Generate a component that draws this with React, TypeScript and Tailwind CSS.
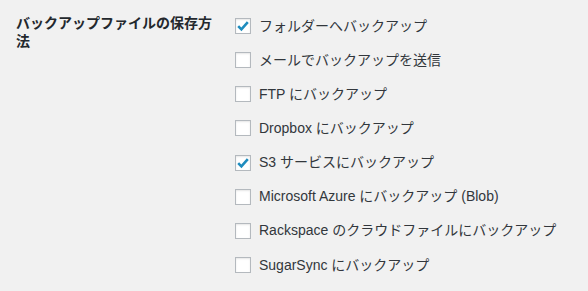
import React from 'react';

const options: Array<{ label: string; checked: boolean }> = [
  { label: 'フォルダーへバックアップ', checked: true },
  { label: 'メールでバックアップを送信', checked: false },
  { label: 'FTP にバックアップ', checked: false },
  { label: 'Dropbox にバックアップ', checked: false },
  { label: 'S3 サービスにバックアップ', checked: true },
  { label: 'Microsoft Azure にバックアップ (Blob)', checked: false },
  { label: 'Rackspace のクラウドファイルにバックアップ', checked: false },
  { label: 'SugarSync にバックアップ', checked: false },
];

const Checkbox: React.FC<{ checked: boolean }> = ({ checked }) => (
  <span className="flex h-4 w-4 shrink-0 items-center justify-center border border-[#b4b9be] bg-white shadow-[inset_0_1px_2px_rgba(0,0,0,0.1)]">
    {checked && (
      <svg width="14" height="14" viewBox="0 0 14 14" fill="none">
        <path d="M2.2 7.2 L5.4 10.4 L11.8 3.2" stroke="#1e8cbe" strokeWidth="2.6" strokeLinecap="butt" strokeLinejoin="miter" />
      </svg>
    )}
  </span>
);

export default function App() {
  return (
    <div className="flex h-[291px] w-[588px] bg-[#f1f1f1] font-['Liberation_Sans','Noto_Sans_CJK_JP',sans-serif]">
      {/* heading column */}
      <div className="ml-4 w-[200px] shrink-0 pt-[14px] text-[14px] font-bold leading-[18px] text-[#23282d]">
        バックアップファイルの保存方法
      </div>
      {/* options */}
      <div className="ml-[19px] flex flex-col pt-[9px]">
        {options.map((o) => (
          <label key={o.label} className="flex h-[34.15px] items-center gap-2 text-[14px] text-[#32373c]">
            <Checkbox checked={o.checked} />
            <span>{o.label}</span>
          </label>
        ))}
      </div>
    </div>
  );
}
